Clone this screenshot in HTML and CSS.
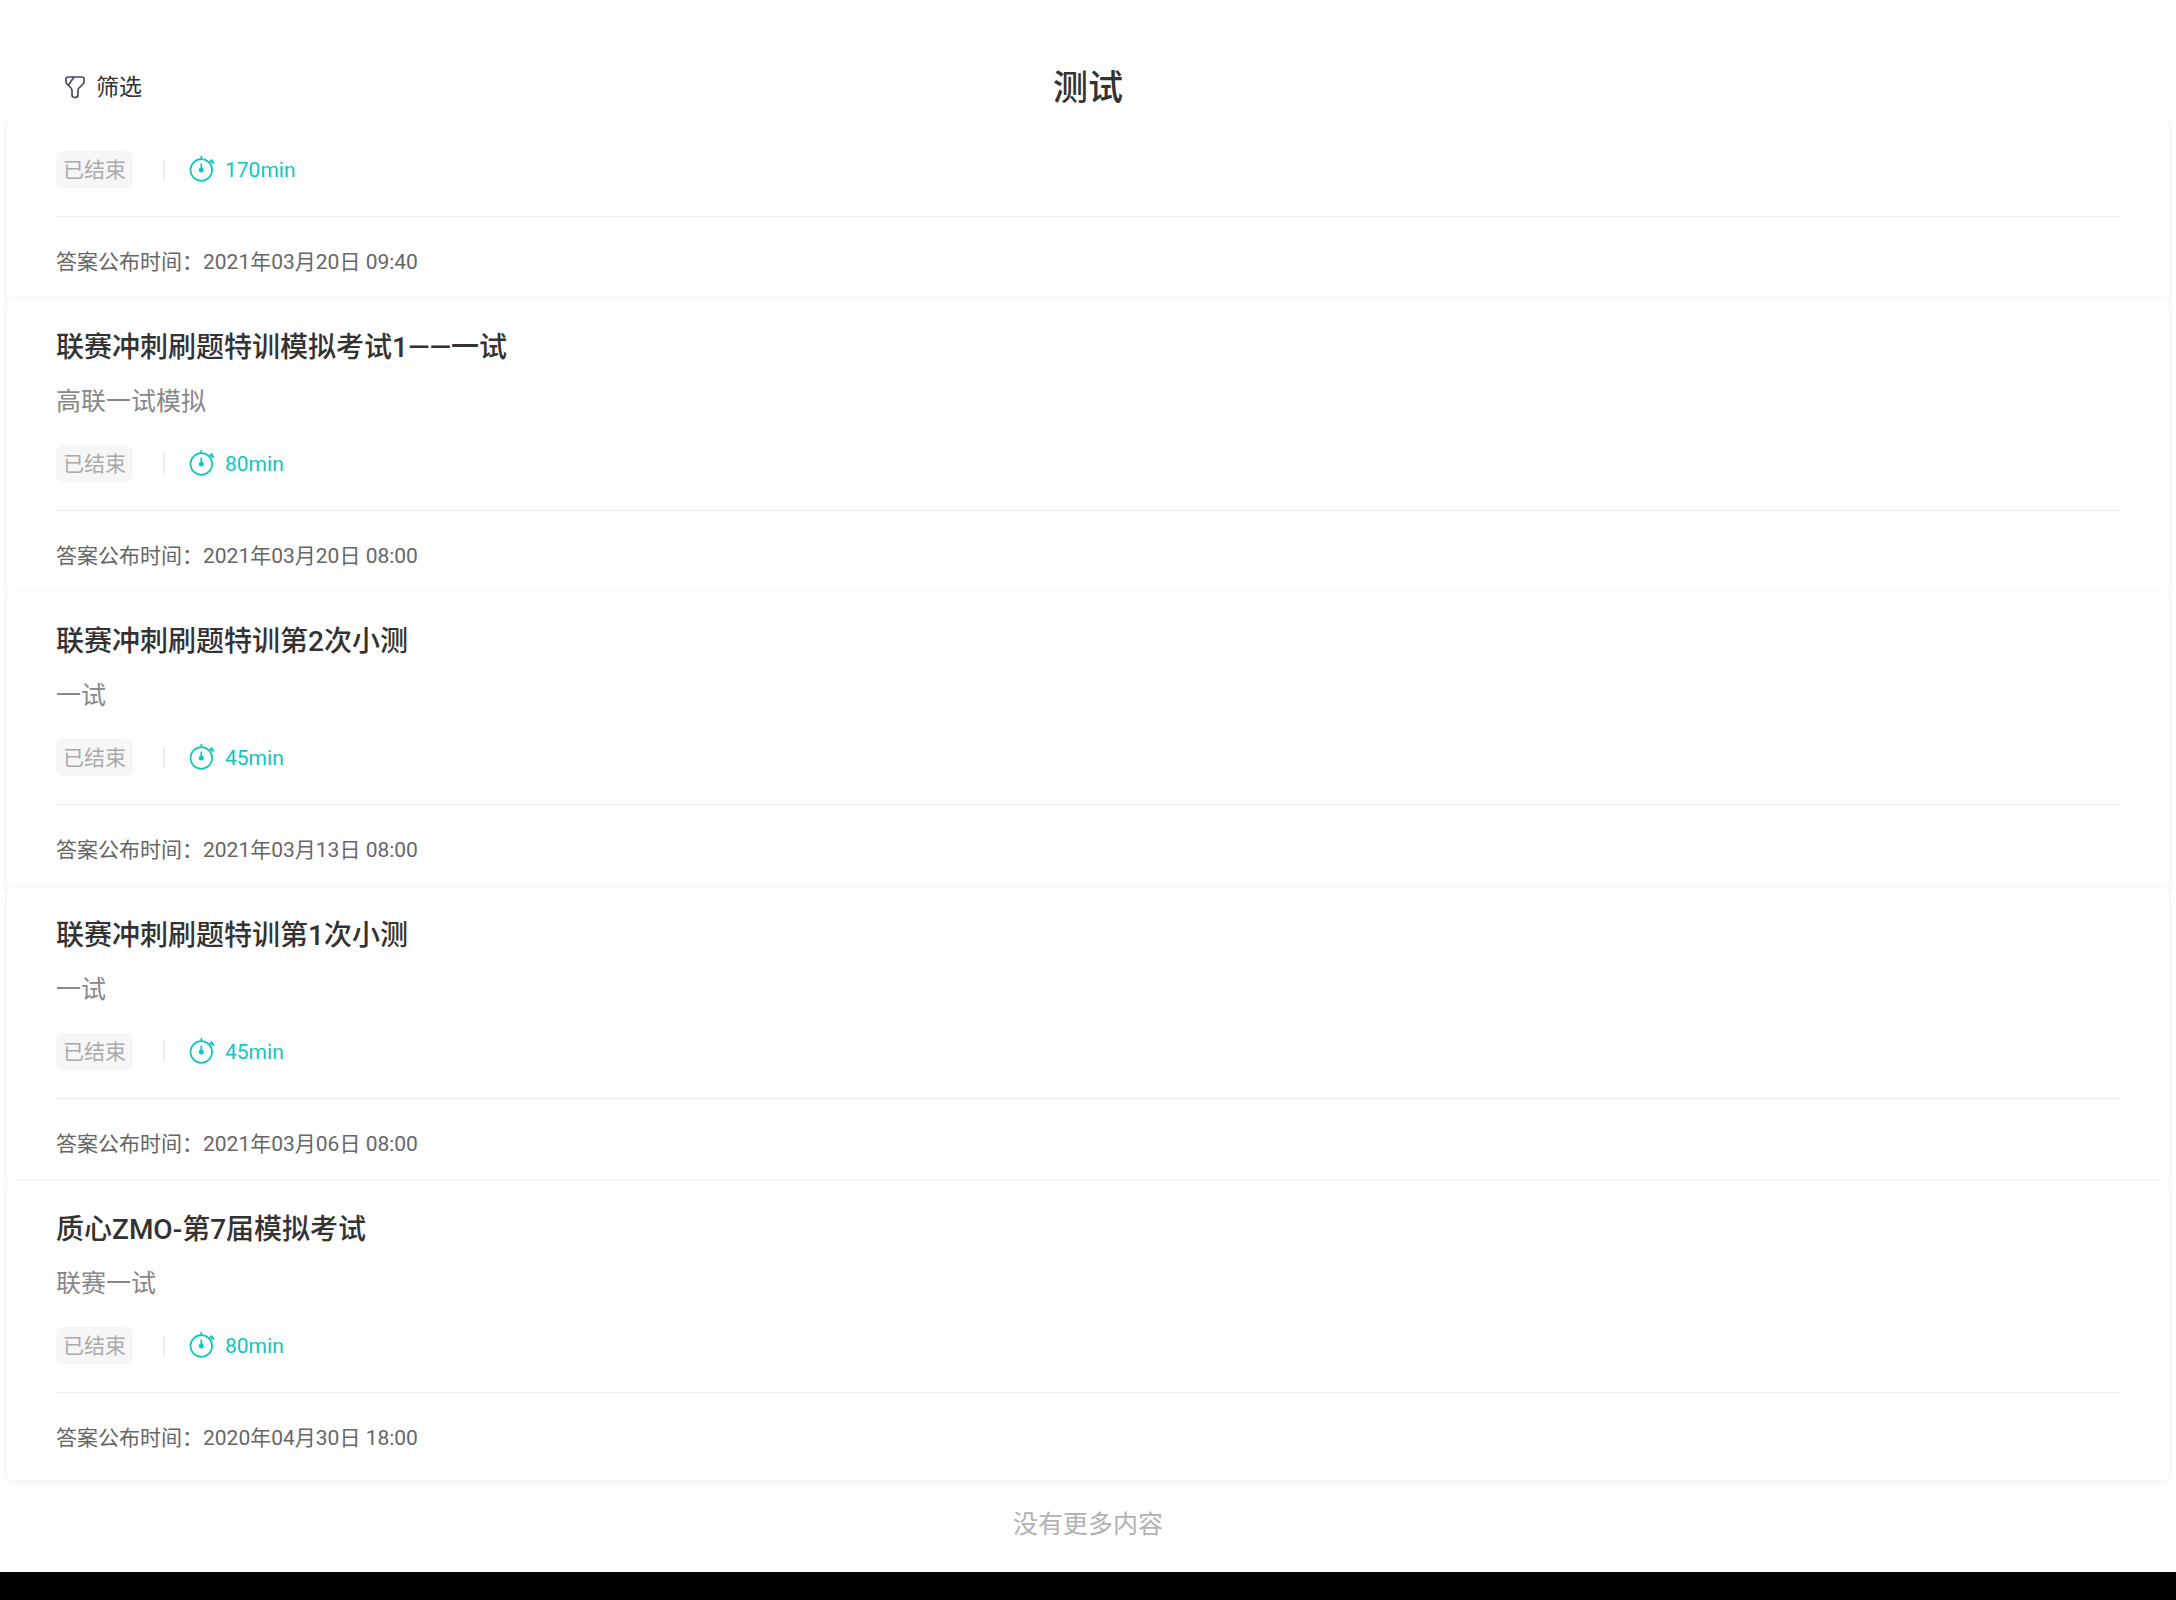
FILE: index.html
```html
<!DOCTYPE html>
<html lang="zh-CN">

<head>
    <meta charset="UTF-8">
    <meta name="viewport" content="width=device-width, initial-scale=1.0">
    <title>测试</title>
    <link rel="stylesheet" href="styles.css">
</head>

<body>
    <svg class="sprite" aria-hidden="true">
        <symbol id="timer" viewBox="0 0 26 26">
            <circle cx="12.300" cy="14" r="10.800" fill="none" stroke="currentColor" stroke-width="1.700" />
            <path d="M12.300 0v3.500M20.500 6l2.500-2.500" fill="none" stroke="currentColor" stroke-width="1.700" />
            <path d="M23 3.500l3 4-4.500 0z" fill="currentColor" />
            <path d="M12.300 7.500v6" fill="none" stroke="currentColor" stroke-width="1.700" />
            <circle cx="12.300" cy="14" r="2.500" fill="currentColor" />
        </symbol>
    </svg>

    <header class="header">
        <button class="filter" type="button">
            <svg class="filter-icon" viewBox="0 0 20 23" aria-hidden="true">
                <path d="M3 1h14q2 0 2 2v2.500q0 1.500-1 2.500l-4 4q-1 1-1 2.500v4.500q0 2.500-3 2.500t-3-2.500v-4.500q0-1.500-1-2.500l-4-4q-1-1-1-2.500v-2.500q0-2 2-2zM9 1L3.500 9" />
            </svg>
            <span class="filter-text">筛选</span>
        </button>
        <h1 class="header-title">测试</h1>
    </header>

    <main class="list">
        <section class="card card-continued">
            <div class="meta">
                <span class="badge">已结束</span>
                <span class="duration"><svg class="timer-icon"><use href="#timer" /></svg><span class="minutes">170min</span></span>
            </div>
            <p class="publish">答案公布时间：2021年03月20日 09:40</p>
        </section>

        <section class="card">
            <h2 class="card-title">联赛冲刺刷题特训模拟考试1——一试</h2>
            <p class="card-desc">高联一试模拟</p>
            <div class="meta">
                <span class="badge">已结束</span>
                <span class="duration"><svg class="timer-icon"><use href="#timer" /></svg><span class="minutes">80min</span></span>
            </div>
            <p class="publish">答案公布时间：2021年03月20日 08:00</p>
        </section>

        <section class="card">
            <h2 class="card-title">联赛冲刺刷题特训第2次小测</h2>
            <p class="card-desc">一试</p>
            <div class="meta">
                <span class="badge">已结束</span>
                <span class="duration"><svg class="timer-icon"><use href="#timer" /></svg><span class="minutes">45min</span></span>
            </div>
            <p class="publish">答案公布时间：2021年03月13日 08:00</p>
        </section>

        <section class="card">
            <h2 class="card-title">联赛冲刺刷题特训第1次小测</h2>
            <p class="card-desc">一试</p>
            <div class="meta">
                <span class="badge">已结束</span>
                <span class="duration"><svg class="timer-icon"><use href="#timer" /></svg><span class="minutes">45min</span></span>
            </div>
            <p class="publish">答案公布时间：2021年03月06日 08:00</p>
        </section>

        <section class="card">
            <h2 class="card-title">质心ZMO-第7届模拟考试</h2>
            <p class="card-desc">联赛一试</p>
            <div class="meta">
                <span class="badge">已结束</span>
                <span class="duration"><svg class="timer-icon"><use href="#timer" /></svg><span class="minutes">80min</span></span>
            </div>
            <p class="publish">答案公布时间：2020年04月30日 18:00</p>
        </section>

        <p class="no-more">没有更多内容</p>
    </main>

    <footer class="nav-bar"></footer>
</body>

</html>
```

FILE: styles.css
```css
* {
    box-sizing: border-box;
}

body {
    display: flex;
    flex-direction: column;
    height: 100vh;
    margin: 0;
    background: #fefefe;
    color: #333;
    font-family: Roboto, "Noto Sans CJK SC", sans-serif;
    overflow: hidden;
}

h1,
h2,
p {
    margin: 0;
}

.sprite {
    display: none;
}

.header {
    display: grid;
    grid-template-columns: 1fr auto 1fr;
    align-items: center;
    flex: none;
    padding: 55px 65px 0;
    height: 119px;
}

.filter {
    display: flex;
    align-items: center;
    justify-self: start;
    gap: 11px;
    padding: 0;
    border: none;
    background: none;
    color: #333;
    font-family: inherit;
    font-size: 23px;
    line-height: 32px;
    cursor: pointer;
}

.filter-text {
    padding-top: 2px;
}

.filter-icon {
    width: 20px;
    height: 23px;
    fill: none;
    stroke: #4a4860;
    stroke-width: 1.7;
}

.header-title {
    padding-top: 4px;
    font-size: 35px;
    font-weight: 500;
    line-height: 48px;
}

.list {
    flex: 1;
    overflow: hidden;
}

.card {
    margin: -5px 7px 0;
    padding: 29px 49px 27px;
    border-radius: 5px;
    background: #fefefe;
    box-shadow: 0 1px 7px rgba(0, 0, 0, 0.07);
}

/* top of this card is scrolled under the header */
.card-continued {
    margin-top: 0;
    padding-top: 32px;
    border-top-left-radius: 0;
    border-top-right-radius: 0;
}

.card-title {
    font-size: 28px;
    font-weight: 500;
    line-height: 40px;
}

.card-desc {
    margin: 16px 0 25px;
    color: #888;
    font-size: 25px;
    line-height: 36px;
}

.meta {
    display: flex;
    align-items: center;
    padding-bottom: 28px;
    border-bottom: 1px solid #ececec;
    font-size: 21px;
}

.badge {
    padding: 2px 7px 0;
    border-radius: 7px;
    background: #f6f6f6;
    color: #aaa;
    line-height: 35px;
}

.duration {
    display: flex;
    align-items: center;
    gap: 10px;
    margin-left: 30px;
    color: #0cc8c0;
}

.duration::before {
    content: "";
    width: 2px;
    height: 21px;
    margin-right: 14px;
    background: #ececec;
}

.timer-icon {
    width: 26px;
    height: 26px;
    margin-bottom: 2px;
}

.minutes {
    padding-top: 2px;
    line-height: 35px;
}

.publish {
    padding-top: 30px;
    color: #666;
    font-size: 21px;
    line-height: 30px;
}

.no-more {
    padding-top: 27px;
    color: #b2b2b2;
    font-size: 25px;
    line-height: 36px;
    text-align: center;
}

.nav-bar {
    flex: none;
    height: 28px;
    background: #000;
}
```
